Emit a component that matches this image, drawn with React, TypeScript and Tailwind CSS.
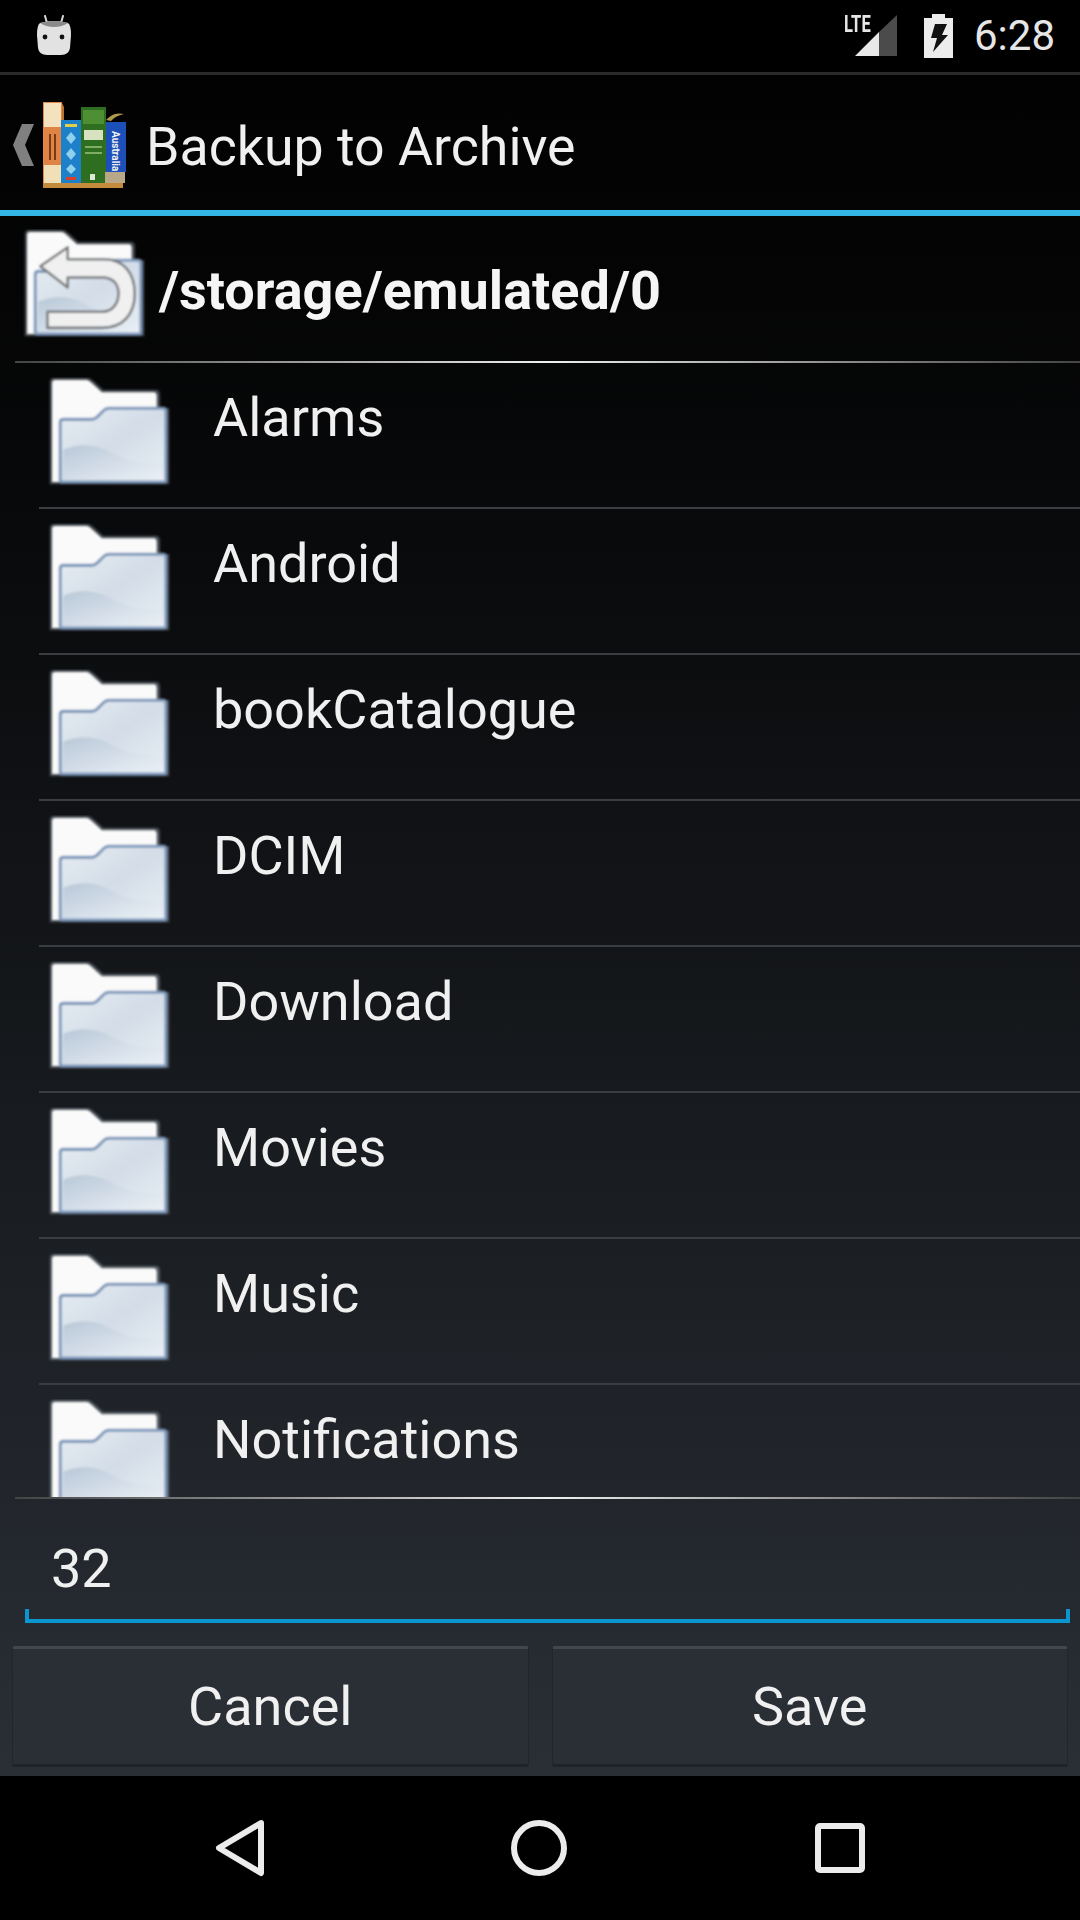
import React from "react";

const font = { fontFamily: "Roboto, sans-serif" };

function Folder({ back = false, id }: { back?: boolean; id: string }) {
  return (
    <svg width="126" height="113" viewBox="0 0 124 112" preserveAspectRatio="none" className="shrink-0 block">
      <defs>
        <linearGradient id={`f${id}`} x1="0" y1="0" x2="1" y2="1">
          <stop offset="0" stopColor="#e6ecf2" />
          <stop offset="0.5" stopColor="#d3dde7" />
          <stop offset="1" stopColor="#e9eff5" />
        </linearGradient>
        <linearGradient id={`s${id}`} x1="0" y1="0" x2="1" y2="1">
          <stop offset="0" stopColor="#b9c8d8" />
          <stop offset="0.7" stopColor="#dde5ee" />
          <stop offset="1" stopColor="#e9eff5" />
        </linearGradient>
        <filter id={`b${id}`} x="-5%" y="-5%" width="110%" height="110%">
          <feGaussianBlur stdDeviation="0.8" />
        </filter>
      </defs>
      <g filter={`url(#b${id})`}>
        <path d="M3 5 Q3 2 7 2 L38 2 Q41 2 44 5 L54 14 L106 14 Q109 14 109 18 L109 32 L118 32 L118 105 L3 105 Z" fill="#9aa7b3" opacity="0.45" stroke="#8b99a8" strokeWidth="2.5" />
        <path d="M4 6 Q4 3 7 3 L38 3 Q40 3 43 6 L53 15 L104 15 Q107 15 107 19 L107 40 L12 104 L4 104 Z" fill="#fafafa" />
        <path d="M12 102 L12 45 Q12 42 15 42 L43 42 Q46 42 49 39 L55 33 Q57 31 60 31 L113 31 Q116 31 116 34 L116 102 Q116 104 114 104 L14 104 Q12 104 12 102 Z" fill={`url(#f${id})`} stroke="#7d98bb" strokeWidth="3" />
        <path d="M15 72 Q40 62 62 75 Q85 88 114 85 L114 102 L15 102 Z" fill={`url(#s${id})`} />
        {back && (
          <path d="M17 37 L44 18 L44 30 L80 30 C100 30 110 45 110 64 C110 85 98 98 78 98 L24 98 L24 82 L78 82 C88 82 94 74 94 64 C94 54 88 48 78 48 L44 48 L44 58 Z" fill="#f0f0f0" stroke="#74787c" strokeWidth="2.5" strokeLinejoin="round" />
        )}
      </g>
    </svg>
  );
}

function Books() {
  return (
    <svg width="86" height="88" viewBox="0 0 86 88" className="block">
      <rect x="0" y="0" width="19" height="82" fill="#e2874a" />
      <rect x="1" y="1" width="17" height="24" fill="#f3e2bd" />
      <rect x="1" y="25" width="17" height="38" fill="#df8444" />
      <rect x="1" y="63" width="17" height="18" fill="#f1dfb8" />
      <path d="M19 1 L21 5 L21 20 L19 20 Z" fill="#b8742c" />
      <rect x="6" y="32" width="2" height="26" fill="#7a3a18" />
      <rect x="11" y="32" width="2" height="26" fill="#7a3a18" />
      <rect x="18" y="18" width="20" height="63" fill="#1e80c8" />
      <rect x="22" y="22" width="12" height="3" fill="#e3d04a" />
      <path d="M28 30 L33 36 L28 42 L23 36 Z M28 46 L33 52 L28 58 L23 52 Z M28 62 L33 67 L28 72 L23 67 Z" fill="#8fd0ec" />
      <rect x="23" y="75" width="10" height="3" fill="#d8402a" />
      <rect x="38" y="5" width="25" height="76" fill="#2d6e20" />
      <rect x="40" y="8" width="21" height="14" fill="#4f8f34" />
      <rect x="41" y="28" width="19" height="10" fill="#d8e2c0" />
      <rect x="42" y="44" width="17" height="2" fill="#7fae62" />
      <rect x="42" y="50" width="17" height="2" fill="#7fae62" />
      <rect x="47" y="72" width="5" height="6" fill="#dfe8d4" />
      <path d="M63 18 Q68 13 72 12 Q76 11 81 12 Q72 14 68 19 Z" fill="#b09a4a" />
      <rect x="63" y="20" width="20" height="50" fill="#1c4fb8" />
      <text x="0" y="0" transform="translate(69 29) rotate(90)" fontSize="10" fontWeight="700" fill="#f2f2f2" fontFamily="Roboto, sans-serif">Australia</text>
      <rect x="62" y="70" width="20" height="11" fill="#b8a888" />
      <rect x="0" y="81" width="80" height="5" fill="#c48a3c" />
    </svg>
  );
}

const names = ["Alarms", "Android", "bookCatalogue", "DCIM", "Download", "Movies", "Music", "Notifications"];

export default function App() {
  return (
    <div className="w-[1080px] h-[1920px] flex flex-col bg-black overflow-hidden text-[#f0f0f0]" style={font}>
      <div className="h-[72px] shrink-0 flex items-center justify-between pl-[37px] pr-[25px] bg-black">
        <svg width="34" height="42" viewBox="0 0 34 42" className="block">
          <path d="M8 1 L10 8 M26 1 L24 8" stroke="#d8d8d8" strokeWidth="2" strokeLinecap="round" />
          <path d="M3 8 Q17 4 31 8 Q34 10 34 20 L33 33 Q32 40 24 40 L10 40 Q2 40 1 33 L0 20 Q0 10 3 8 Z" fill="#e2e2e2" />
          <path d="M3 8 Q17 4 31 8 Q25 12 17 12 Q9 12 3 8 Z" fill="#8a8a8a" />
          <circle cx="8" cy="22" r="2.4" fill="#111" />
          <circle cx="25" cy="22" r="2.4" fill="#111" />
        </svg>
        <div className="flex items-center">
          <div className="relative w-[53px] h-[44px] mr-[27px]">
            <span className="absolute left-0 top-[-1px] text-[23px] font-bold leading-[24px] text-[#e6e6e6] scale-x-[0.72] origin-left">LTE</span>
            <svg width="53" height="42" viewBox="0 0 53 42" className="absolute left-0 top-[1px]">
              <path d="M11 41 L35 17 L35 41 Z" fill="#e8e8e8" />
              <path d="M35 17 L53 0 L53 41 L35 41 Z" fill="#4b4b4b" />
            </svg>
          </div>
          <svg width="29" height="44" viewBox="0 0 29 44" className="block mr-[21px]">
            <path d="M8 0 H21 V4 H29 V44 H0 V4 H8 Z" fill="#ececec" />
            <path d="M11 10 H23 L18 21 H24 L9 38 L13 24 H7 Z" fill="#111" />
          </svg>
          <span className="text-[42px] leading-none font-normal text-[#e6e6e6]">6:28</span>
        </div>
      </div>
      <div className="h-[3px] shrink-0 bg-[#2a2a2a]" />

      <div className="flex-1 flex flex-col min-h-0 bg-gradient-to-b from-[#020202] to-[#2a2f36]">
        <div className="h-[135px] shrink-0 flex items-center">
          <svg width="24" height="44" viewBox="0 0 24 44" className="ml-[12px] mr-[7px] block mt-[4px]">
            <path d="M10 1 H22 L13 22 L22 43 H10 L1 22 Z" fill="#808080" />
          </svg>
          <div className="mt-[6px]"><Books /></div>
          <span className="ml-[17px] text-[53.7px] leading-none mt-[8px]">Backup to Archive</span>
        </div>
        <div className="h-[6px] shrink-0 bg-[#33b5e5]" />

        <div className="h-[145px] shrink-0 flex items-center pl-[23px]">
          <div className="mt-[-6px]"><Folder back id="b" /></div>
          <span className="ml-[10px] text-[54px] font-bold leading-none text-[#f5f5f5] mt-[4px]">/storage/emulated/0</span>
        </div>
        <div className="h-[2px] shrink-0 ml-[15px] bg-gradient-to-r from-[#444] via-[#f0f0f0] to-[#444]" />

        <div className="h-[1134px] shrink-0 overflow-hidden">
          {names.map((n, i) => (
            <div key={n} className="h-[146px] ml-[39px] border-b-2 border-[#3a3e42] flex items-start">
              <div className="ml-[9px] mt-[14px]"><Folder id={String(i)} /></div>
              <span className="ml-[39px] mt-[23px] text-[54px] leading-[64px]">{n}</span>
            </div>
          ))}
        </div>
        <div className="h-[2px] shrink-0 ml-[15px] bg-gradient-to-r from-[#444] via-[#f0f0f0] to-[#444]" />

        <div className="h-[124px] shrink-0 ml-[25px] mr-[10px] flex items-center border-b-4 border-[#0a97d0] relative">
          <span className="ml-[26px] text-[54px] leading-none mt-[20px]">32</span>
          <div className="absolute left-0 bottom-0 w-[4px] h-[10px] bg-[#0a97d0]" />
          <div className="absolute right-0 bottom-0 w-[4px] h-[10px] bg-[#0a97d0]" />
        </div>

        <div className="flex gap-[23px] pl-[12px] pr-[12px] pt-[23px] pb-[9px] flex-1 min-h-0">
          {["Cancel", "Save"].map((b) => (
            <div key={b} className="flex-1 rounded-[3px] bg-[#2a2f36] border-t-[3px] border-t-[#43474d] border-b-[3px] border-b-[#1f2328] border-x border-x-[#22262b] flex items-center justify-center text-[54px] leading-none">
              {b}
            </div>
          ))}
        </div>
      </div>

      <div className="h-[144px] shrink-0 bg-black flex items-center">
        <div className="flex w-full items-center justify-between pl-[215px] pr-[215px]">
          <svg width="50" height="58" viewBox="0 0 50 58">
            <path d="M46 4 L4 29 L46 54 Z" fill="none" stroke="#ececec" strokeWidth="6" strokeLinejoin="round" />
          </svg>
          <svg width="56" height="56" viewBox="0 0 56 56" className="mr-[2px]">
            <circle cx="28" cy="28" r="25" fill="none" stroke="#ececec" strokeWidth="6" />
          </svg>
          <svg width="50" height="50" viewBox="0 0 50 50">
            <rect x="3" y="3" width="44" height="44" rx="2" fill="none" stroke="#ececec" strokeWidth="6" />
          </svg>
        </div>
      </div>
    </div>
  );
}
